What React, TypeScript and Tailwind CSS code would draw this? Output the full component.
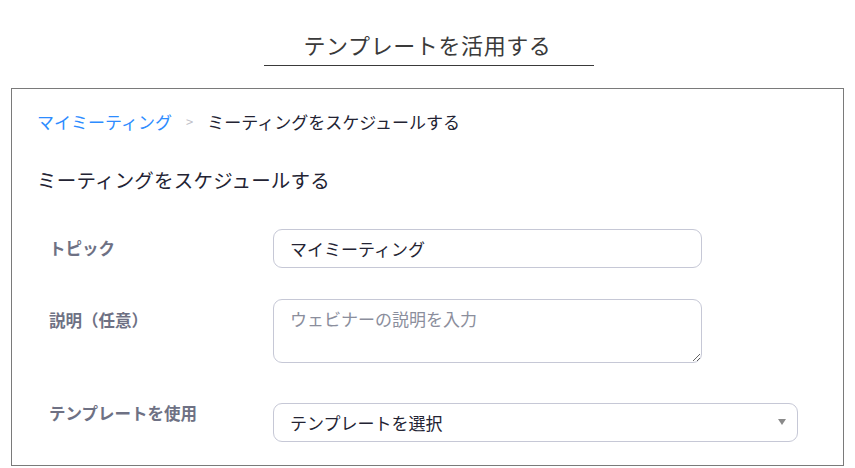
const fieldBase =
  "h-[39px] shrink-0 rounded-[9px] border border-[#c6c8d6] bg-white px-4 text-[17px] text-[#232333] outline-none";

const labelBase = "w-[224px] shrink-0 text-[16.5px] font-bold text-[#6e7184]";

export default function App() {
  return (
    <div className="min-h-[468px] w-full bg-white font-['Noto_Sans_CJK_JP','Noto_Sans',sans-serif] text-[#232333]">
      <header className="flex flex-col items-center pt-[29px]">
        <h1 className="text-[22px] leading-[30px] tracking-[0.6px] text-[#3a3a3a]">テンプレートを活用する</h1>
        <div className="mt-[6px] h-px w-[330px] translate-x-[1px] bg-[#3a3a3a]" />
      </header>

      <section className="mx-[11px] mt-[22px] border border-[#7a7a7a] pl-[25px] pr-[40px] pb-[23px] pt-[21px]">
        <nav className="flex items-center text-[17px] leading-6">
          <a className="text-[#2d8cff]">マイミーティング</a>
          <span className="mx-[14px] text-[13px] text-[#c0c0c8]">&gt;</span>
          <span className="text-[#232333]">ミーティングをスケジュールする</span>
        </nav>

        <h2 className="mt-[32px] text-[19.5px] leading-7 tracking-[0.2px] text-[#232333]">ミーティングをスケジュールする</h2>

        <div className="mt-[35px] flex flex-col pl-3">
          <div className="flex items-start">
            <label className={`${labelBase} pt-[7px] leading-6`}>トピック</label>
            <input className={`${fieldBase} w-[429px]`} defaultValue="マイミーティング" />
          </div>

          <div className="mt-[31px] flex items-start">
            <label className={`${labelBase} pt-[9px] leading-6`}>説明（任意）</label>
            <textarea
              className="h-[64px] w-[429px] shrink-0 rounded-[9px] border border-[#c6c8d6] bg-white px-4 py-[7px] text-[17px] leading-6 text-[#232333] outline-none placeholder:text-[#8b8e9c]"
              placeholder="ウェビナーの説明を入力"
            />
          </div>

          <div className="mt-[40px] flex items-start">
            <label className={`${labelBase} pt-0 leading-5`}>テンプレートを使用</label>
            <div className={`${fieldBase} relative flex w-[525px] items-center`}>
              <span>テンプレートを選択</span>
              <span className="absolute right-[11px] top-[15px] h-0 w-0 border-x-[4px] border-t-[6px] border-x-transparent border-t-[#8a8a8a]" />
            </div>
          </div>
        </div>
      </section>
    </div>
  );
}
